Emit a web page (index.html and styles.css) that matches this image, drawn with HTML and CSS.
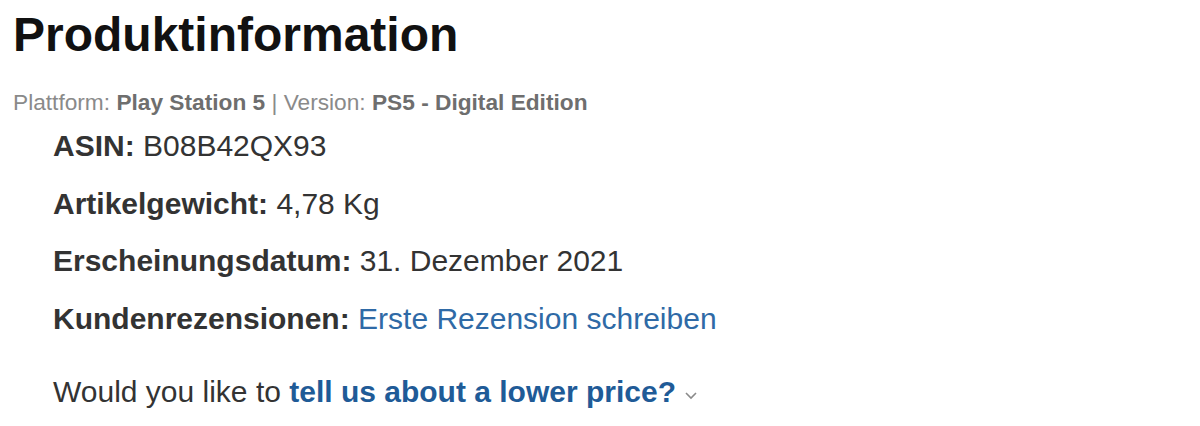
FILE: index.html
```html
<!DOCTYPE html>
<html lang="de">
<head>
<meta charset="utf-8">
<title>Produktinformation</title>
<link rel="stylesheet" href="styles.css">
</head>
<body>
<div class="page">
  <h2 class="title">Produktinformation</h2>
  <div class="variant">Plattform: <b>Play Station 5</b> | Version: <b>PS5 - Digital Edition</b></div>
  <ul class="details">
    <li><span class="label">ASIN:</span> B08B42QX93</li>
    <li><span class="label">Artikelgewicht:</span> 4,78 Kg</li>
    <li><span class="label">Erscheinungsdatum:</span> 31. Dezember 2021</li>
    <li><span class="label">Kundenrezensionen:</span> <a class="link" href="#">Erste Rezension schreiben</a></li>
  </ul>
  <div class="price">Would you like to <a class="link strong" href="#">tell us about a lower price?</a> <svg class="chev" width="14" height="10" viewBox="0 0 14 10"><path d="M2 3 L7 8 L12 3" fill="none" stroke="#8a8a8a" stroke-width="1.6"/></svg></div>
</div>
</body>
</html>
```
FILE: styles.css
```css
html, body {
  margin: 0;
  padding: 0;
  background: #ffffff;
}
.page {
  padding: 7px 13px 0 13px;
  font-family: "Liberation Sans", Arial, sans-serif;
  color: #333333;
}
.title {
  margin: 0;
  font-size: 48px;
  line-height: 56px;
  font-weight: bold;
  color: #111111;
}
.variant {
  margin-top: 24px;
  font-size: 22.7px;
  line-height: 30px;
  color: #8a8a8a;
}
.variant b {
  color: #6e6e6e;
}
.details {
  list-style: none;
  margin: 0;
  padding: 0 0 0 40px;
}
.details li {
  font-size: 30px;
  line-height: 57.5px;
  color: #333333;
}
.label {
  font-weight: bold;
}
.link {
  color: #2f6aa6;
  text-decoration: none;
}
.link.strong {
  font-weight: bold;
  color: #1f5b97;
}
.price {
  margin-top: 16px;
  padding-left: 40px;
  font-size: 30px;
  line-height: 57.5px;
  color: #333333;
}
.chev {
  vertical-align: 2px;
}
```
